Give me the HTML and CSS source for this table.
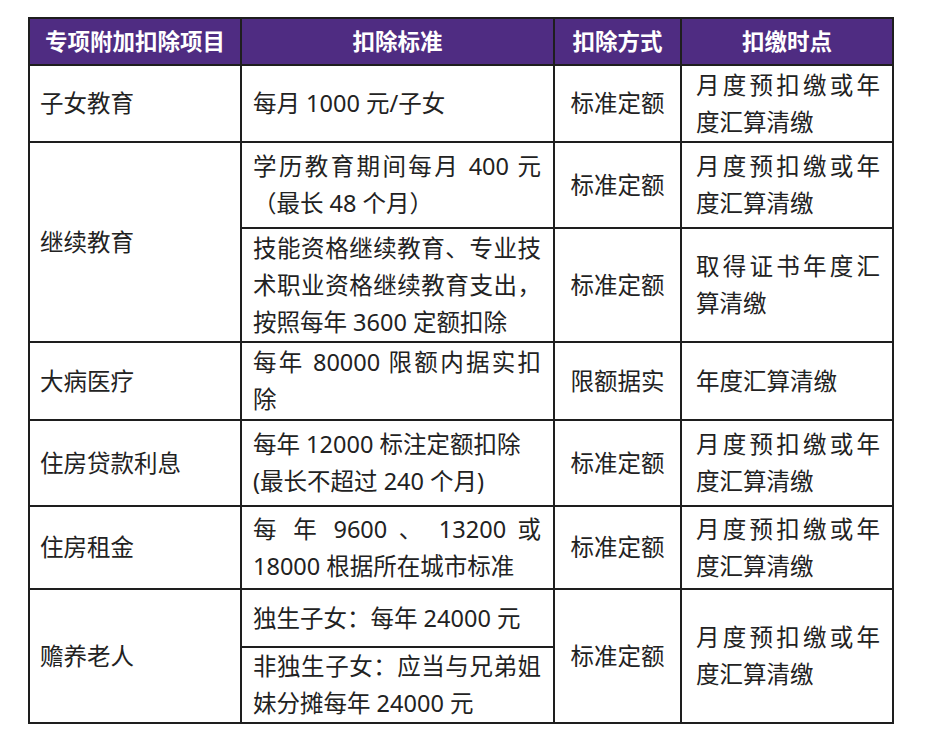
FILE: index.html
```html
<!DOCTYPE html>
<html lang="zh-CN">
<head>
<meta charset="utf-8">
<title>专项附加扣除</title>
<link rel="stylesheet" href="styles.css">
</head>
<body>
<table class="tax">
  <colgroup>
    <col class="c1"><col class="c2"><col class="c3"><col class="c4">
  </colgroup>
  <thead>
    <tr class="h-head">
      <th>专项附加扣除项目</th>
      <th>扣除标准</th>
      <th>扣除方式</th>
      <th>扣缴时点</th>
    </tr>
  </thead>
  <tbody>
    <tr class="h-r1">
      <td class="item">子女教育</td>
      <td class="std">每月 1000 元/子女</td>
      <td class="way">标准定额</td>
      <td class="time">月度预扣缴或年度汇算清缴</td>
    </tr>
    <tr class="h-r2a">
      <td class="item" rowspan="2">继续教育</td>
      <td class="std">学历教育期间每月 400 元（最长 48 个月）</td>
      <td class="way">标准定额</td>
      <td class="time">月度预扣缴或年度汇算清缴</td>
    </tr>
    <tr class="h-r2b">
      <td class="std">技能资格继续教育、专业技术职业资格继续教育支出，按照每年 3600 定额扣除</td>
      <td class="way">标准定额</td>
      <td class="time">取得证书年度汇算清缴</td>
    </tr>
    <tr class="h-r3">
      <td class="item">大病医疗</td>
      <td class="std">每年 80000 限额内据实扣除</td>
      <td class="way">限额据实</td>
      <td class="time">年度汇算清缴</td>
    </tr>
    <tr class="h-r4">
      <td class="item">住房贷款利息</td>
      <td class="std plain">每年 12000 标注定额扣除<br>(最长不超过 240 个月)</td>
      <td class="way">标准定额</td>
      <td class="time">月度预扣缴或年度汇算清缴</td>
    </tr>
    <tr class="h-r5">
      <td class="item">住房租金</td>
      <td class="std">每 年 9600 、 13200 或 18000 根据所在城市标准</td>
      <td class="way">标准定额</td>
      <td class="time">月度预扣缴或年度汇算清缴</td>
    </tr>
    <tr class="h-r6a">
      <td class="item" rowspan="2">赡养老人</td>
      <td class="std">独生子女：每年 24000 元</td>
      <td class="way" rowspan="2">标准定额</td>
      <td class="time" rowspan="2">月度预扣缴或年度汇算清缴</td>
    </tr>
    <tr class="h-r6b">
      <td class="std">非独生子女：应当与兄弟姐妹分摊每年 24000 元</td>
    </tr>
  </tbody>
</table>
</body>
</html>
```

FILE: styles.css
```css
html, body {
  margin: 0;
  padding: 0;
  background: #ffffff;
}

body {
  padding: 17px 0 0 28px;
  font-family: "Noto Sans", "Noto Sans CJK SC", sans-serif;
  color: #222222;
}

.tax {
  border-collapse: collapse;
  table-layout: fixed;
  width: 866px;
  font-size: 23.5px;
  line-height: 37px;
}

.c1 { width: 212px; }
.c2 { width: 313px; }
.c3 { width: 127px; }
.c4 { width: 212px; }

.tax th,
.tax td {
  border: 2px solid #1e1e1e;
  vertical-align: middle;
  padding: 0;
}

.tax th {
  background: #4f2c82;
  color: #ffffff;
  font-weight: 700;
  text-align: center;
  font-size: 22.5px;
}

.item {
  text-align: left;
  padding-left: 10px !important;
}

.std {
  text-align: justify;
  padding: 0 12px 0 11px !important;
}

.std.plain {
  text-align: left;
}

.way {
  text-align: center;
}

.time {
  text-align: justify;
  padding: 0 12px 0 14px !important;
}

.h-head { height: 47px; }
.h-r1 { height: 77px; }
.h-r2a { height: 86px; }
.h-r2b { height: 114px; }
.h-r3 { height: 78px; }
.h-r4 { height: 86px; }
.h-r5 { height: 83px; }
.h-r6a { height: 58px; }
.h-r6b { height: 76px; }
```
